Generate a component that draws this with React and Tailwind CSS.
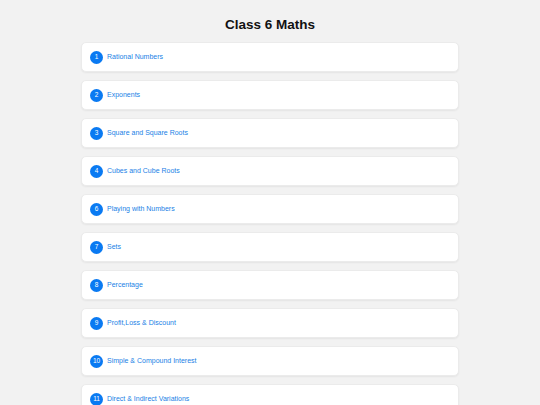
const TOPICS = [
  { n: 1, label: 'Rational Numbers' },
  { n: 2, label: 'Exponents' },
  { n: 3, label: 'Square and Square Roots' },
  { n: 4, label: 'Cubes and Cube Roots' },
  { n: 6, label: 'Playing with Numbers' },
  { n: 7, label: 'Sets' },
  { n: 8, label: 'Percentage' },
  { n: 9, label: 'Profit,Loss & Discount' },
  { n: 10, label: 'Simple & Compound Interest' },
  { n: 11, label: 'Direct & Indirect Variations' },
];

export default function App() {
  return (
    <div
      className="min-h-[405px] bg-[#f2f2f2] flex flex-col items-center"
      style={{ fontFamily: '"Liberation Sans", Arial, sans-serif' }}
    >
      <h1 className="mt-[17px] mb-[9px] text-[13.5px] leading-[16px] font-bold text-[#111]">
        Class 6 Maths
      </h1>
      <div className="w-[378px] flex flex-col gap-[8px]">
        {TOPICS.map(({ n, label }) => (
          <div
            key={n}
            className="h-[30px] flex items-center gap-[4px] pl-[8px] bg-white rounded-[5px] border border-[#ebebeb] shadow-[0_1px_2px_rgba(0,0,0,0.06)]"
          >
            <span className="w-[13px] h-[13px] rounded-full bg-[#0a7af2] text-white text-[6.5px] flex items-center justify-center">
              {n}
            </span>
            <span className="text-[7px] text-[#1a7fe6]">{label}</span>
          </div>
        ))}
      </div>
    </div>
  );
}
